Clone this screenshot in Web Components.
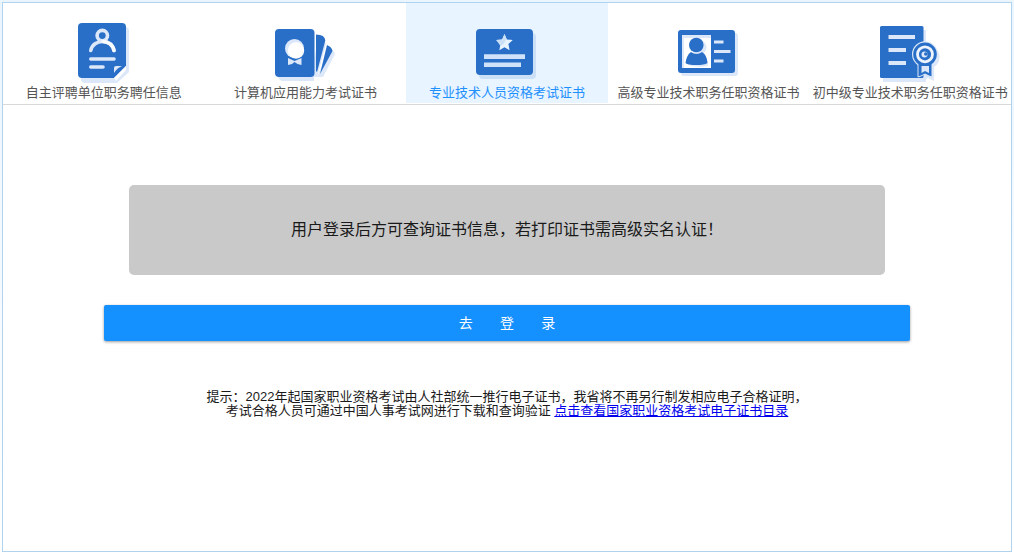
<!DOCTYPE html>
<html lang="zh-CN">
<head>
<meta charset="utf-8">
<meta name="viewport" content="width=device-width, initial-scale=1">
<title>证书查询</title>
<style>
  body {
    margin: 0;
    background: linear-gradient(#ebf5fe, #fff);
    color: #1a1a1a;
    font-family: "Liberation Sans", "Noto Sans CJK SC", sans-serif;
    font-size: 13px;
  }
</style>
</head>
<body>
<cert-panel>
  <cert-tabs slot="tabs">
    <cert-tab icon="appoint">自主评聘单位职务聘任信息</cert-tab>
    <cert-tab icon="computer">计算机应用能力考试证书</cert-tab>
    <cert-tab icon="exam" active>专业技术人员资格考试证书</cert-tab>
    <cert-tab icon="senior">高级专业技术职务任职资格证书</cert-tab>
    <cert-tab icon="junior">初中级专业技术职务任职资格证书</cert-tab>
  </cert-tabs>
  <cert-notice>用户登录后方可查询证书信息，若打印证书需高级实名认证！</cert-notice>
  <login-button>去&nbsp;&nbsp;&nbsp;&nbsp;&nbsp;&nbsp;&nbsp;登&nbsp;&nbsp;&nbsp;&nbsp;&nbsp;&nbsp;&nbsp;录</login-button>
  <cert-hint>提示：2022年起国家职业资格考试由人社部统一推行电子证书，我省将不再另行制发相应电子合格证明，<br>考试合格人员可通过中国人事考试网进行下载和查询验证 <hint-link href="#catalog">点击查看国家职业资格考试电子证书目录</hint-link></cert-hint>
</cert-panel>

<script>
const icons = {
  appoint: `
    <path fill="#dce8f9" d="M13 7h40q4 0 4 4v41L45 63H13q-4 0-4-4V11q0-4 4-4z"/>
    <path fill="#296fc8" d="M10 3h40q4 0 4 4v39L42 58H10q-4 0-4-4V7q0-4 4-4z"/>
    <path fill="#fff" d="M54 46v4L44 61l-2-3z"/>
    <path fill="#dce8f9" d="M42 53v-5q0-2 2-2h6q-5 2-8 7z"/>
    <g fill="none" stroke="#dce8f9" stroke-width="3.6" stroke-linecap="round">
      <circle cx="30.3" cy="15.6" r="5.2"/>
      <path d="M18.8 30.5C21 18.5 40 18.5 42 30.5M18.8 39H42M18.8 47H31"/>
    </g>
    <path d="M31 21.500Q40 22 42 30.500" fill="none" stroke="#f7faff" stroke-width="3.6" stroke-linecap="round"/>`,
  computer: `
    <path fill="#dce8f9" d="M45 19q7 1 8 5L44 57h-6zM56 29q5 1 6 5L50 57h-6zM10 13h31v48H10q-4 0-5-5z"/>
    <path fill="#dce8f9" d="M41 57q0 4-5 4h-5v-8z"/>
    <path fill="#296fc8" d="M43 14.5q9 0 9.3 6L44 52l-1-1zM54 25q5 2 5.5 6L47 54z"/>
    <rect x="2" y="9" width="39.5" height="48" rx="4" fill="#296fc8"/>
    <circle cx="21.5" cy="28.5" r="9.5" fill="#dce8f9"/>
    <circle cx="23" cy="30.5" r="8.2" fill="#fff"/>
    <path fill="#dce8f9" d="M15 38l6.500 3 7-3v7l-4-1-3-2-2.500 2-4 1z"/>`,
  exam: `
    <rect x="4" y="13" width="57" height="46" rx="4" fill="#cbdff6"/>
    <rect x="1" y="9" width="57" height="46" rx="4" fill="#296fc8"/>
    <path fill="#e8f3ff" d="M29.500 14l2.400 5.400 5.900.6-4.400 4 1.200 6.200-5.100-3-5.200 3 1.200-6.200-4.300-4 5.900-.6z"/>
    <path fill="#cbdff6" d="M29.500 14l2 5-3 5-3 2-4.300-6 5.900-.6z"/>
    <path fill="#cfe2f9" d="M9 34.300h41v4.600H9zM9 42.500h37v4.400H9z"/>`,
  senior: `
    <rect x="4" y="13" width="57" height="43" rx="3" fill="#dce8f9"/>
    <rect x="1" y="10" width="57" height="43" rx="3" fill="#296fc8"/>
    <path fill="#dce8f9" d="M5 15h29v33H5z"/>
    <path fill="#fff" d="M7 18h27v30H7z"/>
    <circle cx="22" cy="27.500" r="7.500" fill="#dce8f9"/>
    <path fill="#dce8f9" d="M11 45q0-9 7-12h7q6 3 6 13-10 2-20-1z"/>
    <circle cx="19.300" cy="25" r="7.300" fill="#296fc8"/>
    <path fill="#296fc8" d="M8.500 43q1-8 5.500-11 5.500 4 11 0 5 3 5.500 11-3 2-11 2-9 0-11-2z"/>
    <path stroke="#dce8f9" stroke-width="3.200" d="M37 22h9.500M37 31.500h16.500M37 41h9.500"/>`,
  junior: `
    <path fill="#dce8f9" d="M5 10h43v52H5z"/>
    <circle cx="49.500" cy="37" r="12" fill="#dce8f9"/>
    <path fill="#dce8f9" d="M44 45h12v16l-6-3-6 3z"/>
    <rect x="2" y="6" width="43.500" height="52" rx="1.500" fill="#296fc8"/>
    <path stroke="#dce8f9" stroke-width="4" d="M10.500 17H37M10.500 30H28M10.500 43H28"/>
    <circle cx="47" cy="34.300" r="13" fill="#dce8f9"/>
    <path fill="#296fc8" stroke="#dce8f9" stroke-width="1" d="M40 43h14v14l-3-1-4-2-4 2-3 1z"/>
    <circle cx="47" cy="34.300" r="11.800" fill="#296fc8"/>
    <circle cx="47" cy="34.300" r="7.500" fill="none" stroke="#eef4fd" stroke-width="2.800"/>
    <circle cx="46.500" cy="34.500" r="3" fill="#dce8f9"/>
    <circle cx="47.800" cy="34" r="1.800" fill="#296fc8"/>
    <path fill="#dce8f9" d="M43.500 46h7.500v7l-4-2-3.500 2z"/>`
};

/* Registers an element whose shadow root is cloned from the given markup. */
function define(name, markup, setup) {
  const template = document.createElement('template');
  template.innerHTML = markup;
  customElements.define(name, class extends HTMLElement {
    constructor() {
      super();
      this.attachShadow({ mode: 'open' }).append(template.content.cloneNode(true));
    }
    connectedCallback() {
      if (setup) setup(this, this.shadowRoot);
    }
  });
}

define('cert-panel', `
  <style>
    :host { display: block; margin: 2px; box-sizing: border-box; min-height: calc(100vh - 4px);
      border: 1px solid #b2d3ee; background: #fff; }
    main { display: flex; flex-direction: column; align-items: center; padding: 80px 0 40px; }
  </style>
  <slot name="tabs"></slot>
  <main><slot></slot></main>`);

define('cert-tabs', `
  <style>
    :host { display: block; border-bottom: 1px solid #d9d9d9; padding-bottom: 1px; }
    nav { display: grid; grid-template-columns: repeat(5, minmax(0, 1fr)); }
  </style>
  <nav><slot></slot></nav>`);

define('cert-tab', `
  <style>
    :host { display: block; }
    button { display: flex; flex-direction: column; align-items: center; width: 100%;
      margin: 0; padding: 17px 0 1px; border: 0; background: none; color: #555;
      font: inherit; line-height: 18px; white-space: nowrap; cursor: pointer; }
    svg { display: block; width: 64px; height: 64px; }
    :host([active]) button { background: #e8f4ff; color: #1e90ff; }
  </style>
  <button type="button">
    <svg viewBox="0 0 64 64" aria-hidden="true"></svg>
    <span><slot></slot></span>
  </button>`, (host, root) => {
  root.querySelector('svg').innerHTML = icons[host.getAttribute('icon')] || '';
  if (host.hasAttribute('active')) root.querySelector('button').setAttribute('aria-current', 'page');
});

define('cert-notice', `
  <style>
    :host { display: block; width: 75%; }
    p { margin: 0; padding: 33px 16px; border-radius: 5px; background: #c9c9c9;
      font-size: 16px; line-height: 24px; text-align: center; }
  </style>
  <p><slot></slot></p>`);

define('login-button', `
  <style>
    :host { display: block; width: 80%; margin-top: 30px; }
    button { display: block; width: 100%; margin: 0; padding: 8px 0; border: 0;
      border-radius: 2px; background: #1490ff; color: #fff; font: inherit; font-size: 14px;
      line-height: 20px; box-shadow: 0 1px 3px rgba(0, 0, 0, .4); cursor: pointer; }
  </style>
  <button type="button"><slot></slot></button>`);

define('cert-hint', `
  <style>
    :host { display: block; margin-top: 49px; }
    p { margin: 0; line-height: 14px; text-align: center; }
  </style>
  <p><slot></slot></p>`);

define('hint-link', `
  <style>
    :host { display: inline; }
    a { color: #00e; text-decoration: underline; }
  </style>
  <a><slot></slot></a>`, (host, root) => {
  root.querySelector('a').href = host.getAttribute('href');
});
</script>
</body>
</html>
